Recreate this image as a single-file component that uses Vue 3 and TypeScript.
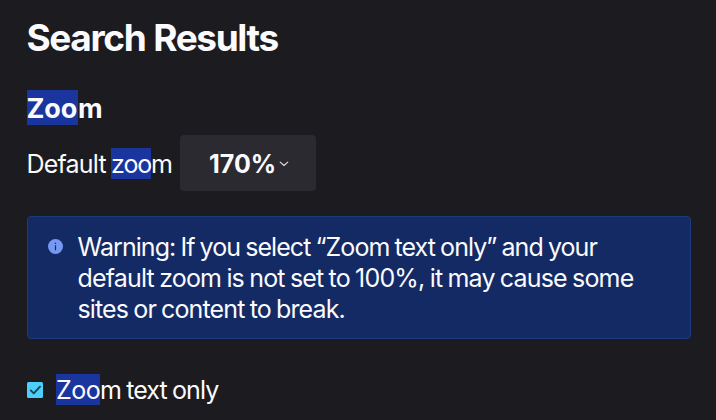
<script setup lang="ts">
import { ref } from 'vue'

const zoomLevel = ref<string>('170%')
const textOnly = ref<boolean>(true)
const warningLines: string[] = [
  'Warning: If you select “Zoom text only” and your',
  'default zoom is not set to 100%, it may cause some',
  'sites or content to break.',
]
</script>

<template>
  <main class="page">
    <h1 class="title">Search Results</h1>
    <h2 class="heading"><mark>Zoo</mark>m</h2>
    <div class="row">
      <label class="label">Default <mark>zoo</mark>m</label>
      <button class="select" type="button">
        <span>{{ zoomLevel }}</span>
        <svg class="chevron" viewBox="0 0 10 6"><path d="M1.2 1.2 5 4.5 8.8 1.2" /></svg>
      </button>
    </div>
    <section class="warning">
      <svg class="info" viewBox="0 0 15 15">
        <circle cx="7.5" cy="7.5" r="7.5" fill="#7599f3" />
        <path d="M6.9 3.7h1.2v1.4H6.9zM6.9 6.2h1.2v5.1H6.9z" fill="#142a68" />
      </svg>
      <p class="message"><span v-for="line in warningLines" :key="line" class="line">{{ line }}</span></p>
    </section>
    <div class="check-row" role="checkbox" :aria-checked="textOnly" @click="textOnly = !textOnly">
      <svg class="check" viewBox="0 0 16 16">
        <rect width="16" height="16" rx="1.5" fill="#4dcffb" />
        <path v-if="textOnly" d="m3.8 8.4 3 3 6.2-6.7" />
      </svg>
      <span class="check-label"><mark>Zoo</mark>m text only</span>
    </div>
  </main>
</template>

<style>
body { background: #1c1b20; }
</style>

<style scoped>
.page {
  box-sizing: border-box;
  width: 716px;
  height: 420px;
  padding: 14px 25px 0 27px;
  overflow: hidden;
  background: #1c1b20;
  color: #fbfbfe;
  font: 440 25px/31px Inter, "Liberation Sans", sans-serif;
  letter-spacing: -0.94px;
  word-spacing: -1px;
  white-space: nowrap;
}
h1, h2, p { margin: 0; }
mark { box-sizing: border-box; height: 31px; padding-top: 2px; line-height: 29px; background: #1a369e; color: inherit; display: inline-block; }
.title { margin-left: -0.5px; font-size: 37px; line-height: 48px; font-weight: 650; letter-spacing: -1.38px; word-spacing: 0.5px; }
.heading { margin-top: 28px; height: 35px; font-size: 27px; line-height: 35px; font-weight: 700; letter-spacing: -0.1px; }
.heading mark { width: 51px; height: 35px; line-height: 33px; text-indent: -0.5px; }
.row { display: flex; align-items: center; height: 56px; margin-top: 10px; }
.label { width: 153px; height: 31px; letter-spacing: -0.78px; text-indent: -0.6px; }
.label mark { width: 40px; text-indent: 0; letter-spacing: -1.1px; }
.select {
  box-sizing: border-box; display: flex; align-items: center; gap: 3px;
  width: 136px; height: 56px; padding: 2px 0 0 29px; border: 0; border-radius: 4px;
  background: #2b2a30; color: inherit; font: inherit; font-weight: 700; letter-spacing: 0;
}
.chevron { width: 10px; height: 6px; margin-top: -1px; fill: none; stroke: #e4e4e8; stroke-width: 1.1; stroke-linecap: round; stroke-linejoin: round; }
.warning {
  box-sizing: border-box; display: flex; gap: 14.5px; width: 664px; height: 123px;
  margin-top: 25px; padding: 15px 20px; border: 1px solid #1b3b7a; border-radius: 4px; background: #142a64;
}
.info { width: 15px; height: 15px; margin-top: 7px; flex: none; }
.line { display: block; }
.line:nth-child(2) { letter-spacing: -0.82px; }
.line:nth-child(3) { letter-spacing: -0.87px; }
.check-row { display: flex; align-items: center; gap: 13px; height: 32px; margin-top: 35px; }
.check-label { height: 31px; margin-top: -1px; letter-spacing: -0.9px; }
.check-label mark { width: 44px; letter-spacing: -0.5px; }
.check { width: 16px; height: 16px; }
.check path { fill: none; stroke: #1b4257; stroke-width: 1.9; stroke-linecap: round; stroke-linejoin: round; }
</style>
